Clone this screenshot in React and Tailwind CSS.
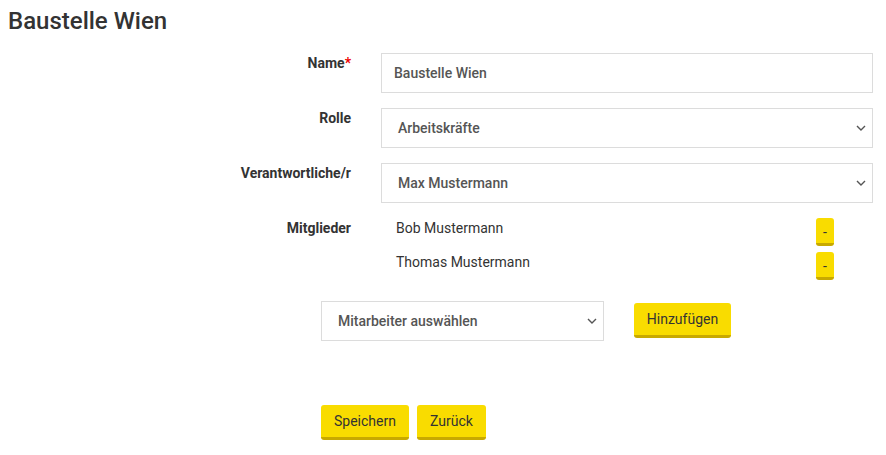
import React from "react";

const Chevron = () => (
  <svg width="10" height="6" viewBox="0 0 10 6" className="shrink-0">
    <path d="M1 1l4 4 4-4" fill="none" stroke="#555" strokeWidth="1.4" />
  </svg>
);

const SelectBox = ({ text, className = "" }) => (
  <div className={`h-10 border border-[#dcdcdc] bg-white flex items-center justify-between pl-4 pr-[6px] ${className}`}>
    <span className="text-[14px] font-medium text-[#555]">{text}</span>
    <Chevron />
  </div>
);

const YBtn = ({ children, className = "" }) => (
  <button className={`bg-[#f9dc00] border-b-[3px] border-[#c8a900] rounded-[3px] text-[#333] text-[14px] ${className}`}>
    {children}
  </button>
);

const Row = ({ label, children, star }) => (
  <div className="flex">
    <div className="w-[351px] text-right text-[14px] font-bold text-[#333] leading-[20px]">
      {label}
      {star && <span className="text-[#e00]">*</span>}
    </div>
    <div className="ml-[30px] w-[492px]">{children}</div>
  </div>
);

export default function App() {
  return (
    <div className="bg-white w-[886px] h-[455px] font-['Roboto',sans-serif] text-[#333]">
      <h1 className="pl-2 pt-[6px] text-[24px] font-medium leading-[30px] text-[#333]">Baustelle Wien</h1>
      <div className="mt-[17px] flex flex-col gap-[15px]">
        <Row label="Name" star>
          <div className="h-10 border border-[#dcdcdc] flex items-center pl-3">
            <span className="text-[14px] font-medium text-[#555]">Baustelle Wien</span>
          </div>
        </Row>
        <Row label="Rolle">
          <SelectBox text="Arbeitskräfte" />
        </Row>
        <Row label="Verantwortliche/r">
          <SelectBox text="Max Mustermann" />
        </Row>
      </div>
      <div className="mt-[15px]">
        <Row label="Mitglieder">
          <div className="flex flex-col gap-[6px] pl-[15px] pr-[39px]">
            {["Bob Mustermann", "Thomas Mustermann"].map((n) => (
              <div key={n} className="flex justify-between items-start">
                <span className="text-[14px] text-[#333] leading-[20px]">{n}</span>
                <YBtn className="w-[18px] h-[28px] leading-none pt-[2px]">-</YBtn>
              </div>
            ))}
          </div>
        </Row>
      </div>
      <div className="ml-[321px] mt-[21px] flex items-center gap-[30px]">
        <SelectBox text="Mitarbeiter auswählen" className="w-[283px] !pl-[16px]" />
        <YBtn className="h-[35px] w-[97px] mt-[2px] self-start">Hinzufügen</YBtn>
      </div>
      <div className="ml-[321px] mt-[64px] flex gap-2">
        <YBtn className="h-[35px] w-[88px]">Speichern</YBtn>
        <YBtn className="h-[35px] w-[69px]">Zurück</YBtn>
      </div>
    </div>
  );
}
